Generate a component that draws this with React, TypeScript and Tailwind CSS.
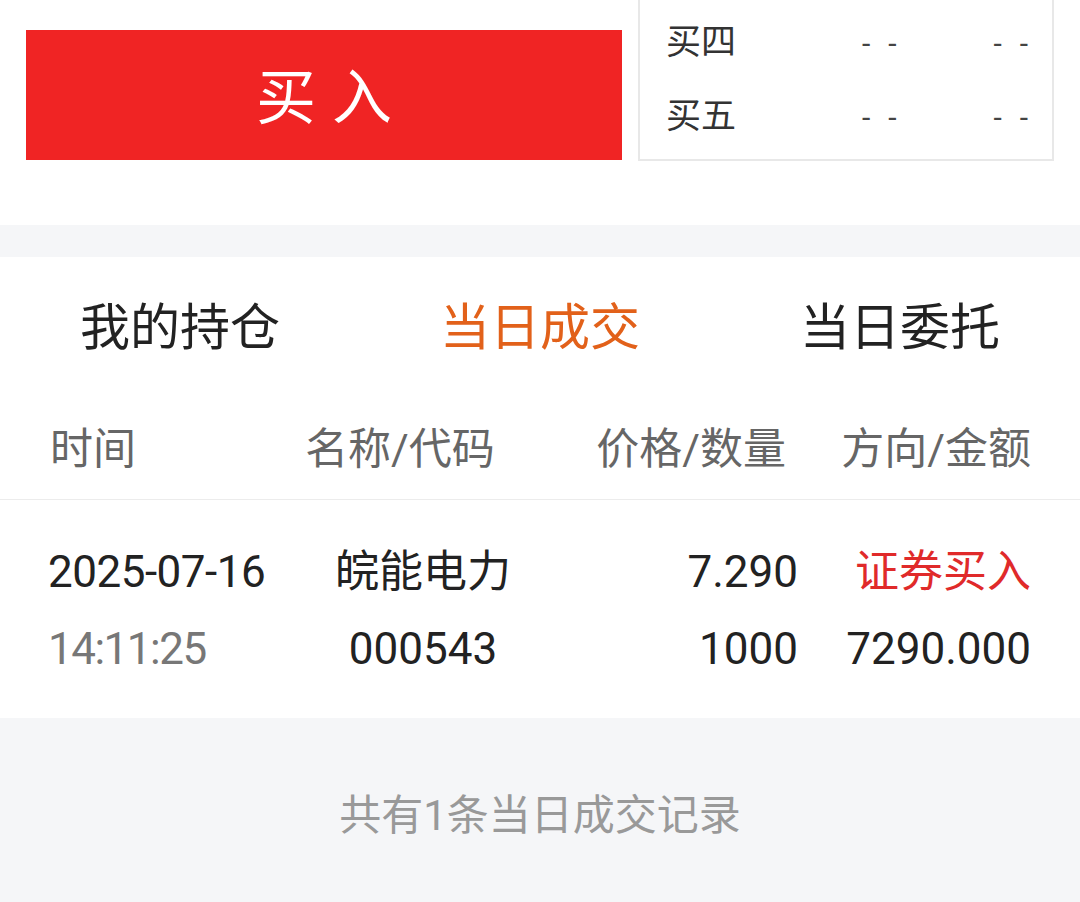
import React from 'react';

const FONT = { fontFamily: 'Roboto, "Noto Sans CJK SC", sans-serif' };

const bookRows = [{ label: '买四' }, { label: '买五' }];

function Dashes() {
  return (
    <span className="flex gap-[18px] text-[30px] text-[#444]">
      <span>-</span>
      <span>-</span>
    </span>
  );
}

export default function App() {
  return (
    <div className="w-[1080px] h-[902px] overflow-hidden bg-white" style={FONT}>
      {/* buy button + order book */}
      <div className="flex h-[225px] bg-white">
        <div className="ml-[26px] mt-[30px] w-[596px] h-[130px] bg-[#f02424] flex items-center justify-center">
          <span className="text-white text-[60px] leading-none tracking-[16px] pl-[16px] pt-[8px]">买入</span>
        </div>
        <div className="ml-[16px] w-[416px] h-[161px] border-2 border-t-0 border-[#e8e8e8] pt-[6px]">
          {bookRows.map((r) => (
            <div key={r.label} className="flex items-center h-[74px] text-[35px] text-[#333]">
              <span className="ml-[26px] w-[196px]">{r.label}</span>
              <Dashes />
              <span className="flex-1" />
              <span className="mr-[24px]">
                <Dashes />
              </span>
            </div>
          ))}
        </div>
      </div>

      <div className="h-[32px] bg-[#f5f6f8]" />

      {/* tabs */}
      <div className="flex h-[143px] items-center text-[50px] text-[#222]">
        <div className="w-[360px] text-center">我的持仓</div>
        <div className="w-[360px] text-center text-[#e2611a]">当日成交</div>
        <div className="w-[360px] text-center">当日委托</div>
      </div>

      {/* table header */}
      <div className="flex h-[100px] items-center px-[48px] border-b border-[#ececec] text-[43px] text-[#666]">
        <div className="w-[252px] pl-[2px]">时间</div>
        <div className="w-[200px] text-center">名称/代码</div>
        <div className="w-[286px] text-right">价格/数量</div>
        <div className="flex-1 text-right pr-[1px]">方向/金额</div>
      </div>

      {/* data row */}
      <div className="flex px-[48px] pt-[34px] pb-[30px] text-[44px] leading-[77px] text-[#222]">
        <div className="w-[252px]">
          <div className="tracking-[-0.5px]">2025-07-16</div>
          <div className="text-[#777] tracking-[-1.5px]">14:11:25</div>
        </div>
        <div className="w-[246px] text-center">
          <div>皖能电力</div>
          <div>000543</div>
        </div>
        <div className="w-[252px] text-right">
          <div>7.290</div>
          <div>1000</div>
        </div>
        <div className="flex-1 text-right pr-[1px]">
          <div className="text-[#e02a2a]">证券买入</div>
          <div>7290.000</div>
        </div>
      </div>

      {/* footer */}
      <div className="h-[184px] bg-[#f5f6f8] pt-[71px] text-center text-[42px] leading-[54px] text-[#999]">
        共有1条当日成交记录
      </div>
    </div>
  );
}
